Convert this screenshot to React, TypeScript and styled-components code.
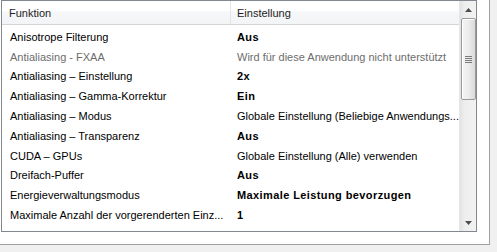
import React from "react";
import styled, { createGlobalStyle } from "styled-components";

const Global = createGlobalStyle`
  html, body { margin: 0; padding: 0; background: #f0f0f0; }
  body { width: 497px; height: 252px; overflow: hidden; font-family: "Liberation Sans", Arial, sans-serif; }
`;

const Panel = styled.div`
  width: 490px;
  height: 245px;
  background: #ffffff;
  border-right: 1px solid #a0a0a0;
  border-bottom: 1px solid #a0a0a0;
  padding-left: 1px;
  box-sizing: border-box;
`;

const ListBox = styled.div`
  width: 476px;
  height: 232px;
  border: 1px solid #828790;
  box-sizing: border-box;
  display: flex;
  background: #ffffff;
`;

const Content = styled.div`
  flex: 1;
  display: flex;
  flex-direction: column;
  min-width: 0;
`;

const Header = styled.div`
  display: grid;
  grid-template-columns: 229px 1fr;
  height: 23px;
  background: linear-gradient(#ffffff, #ffffff 45%, #f6f7f8 46%, #f3f4f6);
  border-bottom: 1px solid #d5d5d5;
  margin-bottom: 2px;
`;

const HeaderCell = styled.div<{ $sep?: boolean }>`
  display: flex;
  align-items: center;
  padding-left: ${(p) => (p.$sep ? "7px" : "6px")};
  font-size: 11px;
  color: #1e1e1e;
  border-right: ${(p) => (p.$sep ? "1px solid #e3e5e8" : "none")};
  white-space: nowrap;
`;

const Row = styled.div`
  display: grid;
  grid-template-columns: 229px 1fr;
  height: 19.8px;
  align-items: center;
`;

const Cell = styled.div<{ $bold?: boolean; $muted?: boolean; $pad: number }>`
  padding-left: ${(p) => p.$pad}px;
  font-size: 11px;
  font-weight: ${(p) => (p.$bold ? 700 : 400)};
  letter-spacing: ${(p) => (p.$bold ? "0.4px" : "0")};
  color: ${(p) => (p.$muted ? "#6d6d6d" : "#000000")};
  white-space: nowrap;
  overflow: hidden;
`;

const ScrollBar = styled.div`
  width: 17px;
  display: flex;
  flex-direction: column;
  align-items: center;
  background: linear-gradient(90deg, #e3e3e3, #eeeeee 30%, #f2f2f2);
  border-left: 1px solid #e6e6e6;
  box-sizing: border-box;
`;

const ArrowBtn = styled.div`
  height: 17px;
  width: 100%;
  display: flex;
  align-items: center;
  justify-content: center;
`;

const Thumb = styled.div`
  width: 15px;
  height: 82px;
  box-sizing: border-box;
  border: 1px solid #9a9a9a;
  border-radius: 2px;
  background: linear-gradient(90deg, #f4f4f4, #ececec 50%, #d9d9d9);
  display: flex;
  align-items: center;
  justify-content: center;
  box-shadow: inset 1px 1px 0 #ffffff;
`;

const Track = styled.div`
  flex: 1;
`;

type R = { name: string; value: string; bold?: boolean; muted?: boolean };

const rows: R[] = [
  { name: "Anisotrope Filterung", value: "Aus", bold: true },
  { name: "Antialiasing - FXAA", value: "Wird für diese Anwendung nicht unterstützt", muted: true },
  { name: "Antialiasing – Einstellung", value: "2x", bold: true },
  { name: "Antialiasing – Gamma-Korrektur", value: "Ein", bold: true },
  { name: "Antialiasing – Modus", value: "Globale Einstellung (Beliebige Anwendungs..." },
  { name: "Antialiasing – Transparenz", value: "Aus", bold: true },
  { name: "CUDA – GPUs", value: "Globale Einstellung (Alle) verwenden" },
  { name: "Dreifach-Puffer", value: "Aus", bold: true },
  { name: "Energieverwaltungsmodus", value: "Maximale Leistung bevorzugen", bold: true },
  { name: "Maximale Anzahl der vorgerenderten Einz...", value: "1", bold: true },
];

export default function App() {
  return (
    <>
      <Global />
      <Panel>
        <ListBox>
          <Content>
            <Header>
              <HeaderCell $sep>Funktion</HeaderCell>
              <HeaderCell>Einstellung</HeaderCell>
            </Header>
            {rows.map((r) => (
              <Row key={r.name}>
                <Cell $pad={8} $muted={r.muted}>{r.name}</Cell>
                <Cell $pad={6} $bold={r.bold} $muted={r.muted}>{r.value}</Cell>
              </Row>
            ))}
          </Content>
          <ScrollBar>
            <ArrowBtn>
              <svg width="7" height="4" viewBox="0 0 7 4"><path d="M0 4 L3.5 0 L7 4 Z" fill="#4d4d4d" /></svg>
            </ArrowBtn>
            <Thumb>
              <svg width="7" height="7" viewBox="0 0 7 7">
                <rect x="0" y="0" width="7" height="1" fill="#7a7a7a" />
                <rect x="0" y="2" width="7" height="1" fill="#7a7a7a" />
                <rect x="0" y="4" width="7" height="1" fill="#7a7a7a" />
                <rect x="0" y="6" width="7" height="1" fill="#7a7a7a" />
              </svg>
            </Thumb>
            <Track />
            <ArrowBtn>
              <svg width="7" height="4" viewBox="0 0 7 4"><path d="M0 0 L7 0 L3.5 4 Z" fill="#4d4d4d" /></svg>
            </ArrowBtn>
          </ScrollBar>
        </ListBox>
      </Panel>
    </>
  );
}
